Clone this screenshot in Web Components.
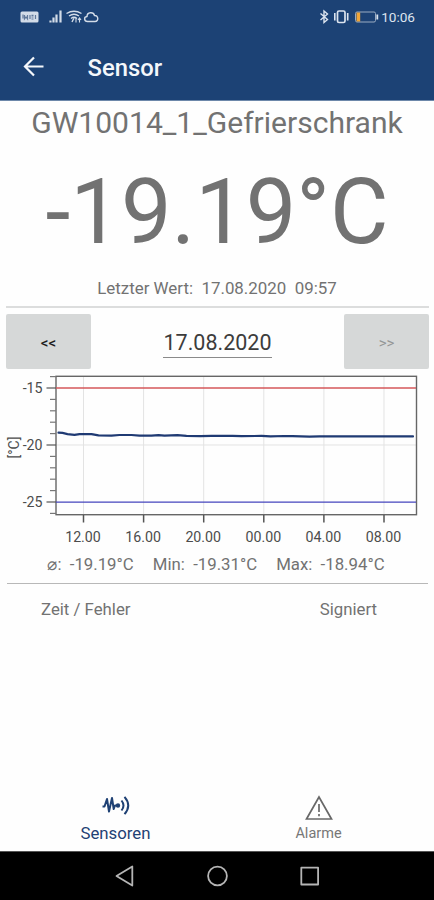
<!DOCTYPE html>
<html lang="de">
<head>
<meta charset="utf-8">
<title>Sensor</title>
<style>
    body {
        margin: 0;
        background: #fefefe;
        font-family: Roboto, sans-serif;
        color: #727272;
    }
</style>
</head>
<body>
<sensor-app></sensor-app>

<script>
class StatusBar extends HTMLElement {
    constructor() {
        super();
        this.attachShadow({ mode: 'open' }).innerHTML = `
            <style>
                :host {
                    display: flex;
                    justify-content: space-between;
                    height: 34px;
                    padding: 0 19px 0 20px;
                    color: #dce4ef;
                    font-size: 13.6px;
                    line-height: 34px;
                }
                .right { display: flex; }
                svg { display: block; flex: none; }
            </style>
            <svg width="80" height="34" viewBox="20 0 80 34" fill="none" stroke="#d3dce8">
                <rect x="20.5" y="11.5" width="18" height="11" rx="1.5" fill="#d3dce8" stroke="none"/>
                <path d="M23 14.500v4M24.500 15v4l1.500-2 1.500 2v-4M30 15v4M31.500 15.300h2M31.500 17h2M31.500 19h2M35.500 15v4" stroke="#60789a" stroke-width="1.200"/>
                <path d="M50.500 22.500v-2M53.500 22.500v-5M56.500 22.500v-8M60.500 22.500v-12" stroke-width="2.200"/>
                <path d="M66.500 13.500q7.500-4.500 15 0M69 16q5-3.500 10 0M71 18.500q3-2.500 6 0M72 22l2-4" stroke-width="1.400"/>
                <path d="M76 18v4.500M79.500 22.500v-4.500M78 20l1.500-2 1.500 2" stroke-width="1.100"/>
                <path d="M87.500 21.500c-3.500 0-4-4.500-.5-5 0-4.500 6.500-5 7.500-1 4-.5 4.500 6 .500 6z" stroke-width="1.400"/>
            </svg>
            <div class="right">
                <svg width="63" height="34" viewBox="317 0 63 34" fill="none" stroke="#dce4ef" stroke-width="1.400">
                    <path d="M319.500 13.500l7 6-3.500 3V11l3.500 3-7 6"/>
                    <rect x="336.500" y="11" width="7.500" height="11.500" rx="1.500" stroke-width="1.700"/>
                    <path d="M333.800 13v7.500M346.700 13v7.500" stroke-width="1.600"/>
                    <rect x="354.500" y="12" width="20" height="10" rx="1.500" stroke="#9aabc2" stroke-width="1"/>
                    <path d="M376.300 14.500v5" stroke-width="1.800"/>
                    <path d="M355.500 12.500h3.700v9h-3.700z" fill="#f0a63a" stroke="none"/>
                </svg>
                <span>10:06</span>
            </div>
        `;
    }
}

class AppHeader extends HTMLElement {
    constructor() {
        super();
        this.attachShadow({ mode: 'open' }).innerHTML = `
            <style>
                :host {
                    display: flex;
                    align-items: center;
                    height: 68px;
                    padding-left: 22px;
                    color: #f4f7fb;
                    font-size: 23.8px;
                    font-weight: 500;
                }
                svg { margin: 0 42.500px 2px 0; }
            </style>
            <svg width="23" height="22" viewBox="0 0 23 22" fill="none" stroke="#f4f7fb" stroke-width="2.200">
                <path d="M21.500 10.500H3.500M12 1.500l-9 9 9 9"/>
            </svg>
            <slot></slot>
        `;
    }
}

class SensorReading extends HTMLElement {
    constructor() {
        super();
        this.attachShadow({ mode: 'open' }).innerHTML = `
            <style>
                :host { display: block; text-align: center; height: 206px; }
                ::slotted(span) { display: block; white-space: pre; }
                .name { height: 45px; line-height: 45px; font-size: 30.050px; }
                .value { height: 135px; line-height: 136px; font-size: 90px; }
                .time { height: 26px; line-height: 16px; font-size: 16.900px; }
            </style>
            <div class="name"><slot name="name"></slot></div>
            <div class="value"><slot name="value"></slot></div>
            <div class="time"><slot name="time"></slot></div>
        `;
    }
}

class DatePager extends HTMLElement {
    constructor() {
        super();
        this.attachShadow({ mode: 'open' }).innerHTML = `
            <style>
                :host {
                    display: flex;
                    justify-content: space-between;
                    align-items: flex-start;
                    margin: 0 5px 0 6px;
                    padding-top: 6px;
                    height: 56px;
                    border-top: 2px solid #dcdddd;
                }
                button {
                    width: 85px;
                    height: 55px;
                    border: 0;
                    border-radius: 2px;
                    background: #d6d8d8;
                    color: #1d1d1d;
                    font: 500 15px Roboto, sans-serif;
                    padding: 2px 0 0;
                }
                button:disabled { color: #949696; font-weight: 400; }
                .date {
                    margin-top: 13px;
                    height: 30px;
                    line-height: 31px;
                    border-bottom: 1px solid #8a8a8a;
                    color: #3c3c3c;
                    font-size: 21.5px;
                }
            </style>
            <button>&lt;&lt;</button>
            <div class="date"><slot></slot></div>
            <button disabled>&gt;&gt;</button>
        `;
    }
}

class SensorChart extends HTMLElement {
    constructor() {
        super();
        const xLabels = ['12.00', '16.00', '20.00', '00.00', '04.00', '08.00'];
        const yLabels = [-15, -20, -25];
        const xAt = i => 83.5 + i * 60.1;
        const yAt = v => 388 + (-15 - v) * 11.4;

        let grid = '', ticks = '', labels = '';
        xLabels.forEach((text, i) => {
            const x = xAt(i);
            grid += `<path d="M${x} 376V515"/>`;
            ticks += `<path d="M${x} 515v7.500" stroke-width="1.500"/>`;
            labels += `<text x="${x - 0.5}" y="541.500" text-anchor="middle">${text}</text>`;
        });
        for (let v = -14; v >= -26; v--) {
            const long = v % 5 === 0;
            ticks += `<path d="M${long ? 46.5 : 50} ${yAt(v)}H56" ${long ? '' : 'stroke="#777"'}/>`;
        }
        yLabels.forEach(v => {
            labels += `<text x="42.500" y="${yAt(v) + 4.8}" text-anchor="end">${v}</text>`;
        });

        this.attachShadow({ mode: 'open' }).innerHTML = `
            <style>
                :host { display: block; height: 180px; }
                svg { display: block; }
                text { font-size: 14.2px; fill: #4c4c4c; }
            </style>
            <svg width="434" height="180" viewBox="0 370 434 180" fill="none">
                <g stroke="#e3e3e3">${grid}<path d="M56 445H416"/></g>
                <rect x="56" y="376.300" width="360.500" height="138.400" stroke="#666" stroke-width="1.400"/>
                <g stroke="#555" stroke-width="1.200">${ticks}</g>
                <path d="M56 388H416" stroke="#d4575a" stroke-width="1.300"/>
                <path d="M56 502.200H416" stroke="#4545bd" stroke-width="1.300"/>
                <path d="M58.500 432.600l4 .3 5 1.200 7 .8 5-.8h12l7 1.300 13 .2 8-.6h12l8 .6 12 .1 7-.6 6 .6 13-.5 9 .6 14 .4 11-.4 21 .1 9 .3 20-.3 9 .5 14-.4 8 .1 17 .5 10-.2H413" stroke="#1f3a73" stroke-width="2.200" stroke-linecap="round" stroke-linejoin="round"/>
                ${labels}
                <text transform="translate(18.800 447.500) rotate(-90)" text-anchor="middle">[°C]</text>
            </svg>
        `;
    }
}

class SensorStats extends HTMLElement {
    constructor() {
        super();
        this.attachShadow({ mode: 'open' }).innerHTML = `
            <style>
                :host {
                    display: flex;
                    justify-content: center;
                    gap: 19px;
                    height: 33px;
                    margin: 0 6px 0 7px;
                    padding-right: 1px;
                    border-bottom: 1.500px solid #b8b8b8;
                    line-height: 29px;
                    font-size: 16.800px;
                    white-space: pre;
                }
                ::slotted(span:first-child) { margin-left: -2px; }
            </style>
            <slot></slot>
        `;
    }
}

class EventColumns extends HTMLElement {
    constructor() {
        super();
        this.attachShadow({ mode: 'open' }).innerHTML = `
            <style>
                :host {
                    display: flex;
                    justify-content: space-between;
                    padding: 9px 57px 0 41px;
                    line-height: 32px;
                    font-size: 16.800px;
                }
            </style>
            <slot></slot>
        `;
    }
}

class TabItem extends HTMLElement {
    constructor() {
        super();
        this.attachShadow({ mode: 'open' }).innerHTML = `
            <style>
                :host {
                    display: flex;
                    flex-direction: column;
                    align-items: center;
                    width: 203px;
                    font-size: 14.500px;
                    line-height: 20px;
                    color: #777;
                }
                :host([active]) { font-size: 16.800px; line-height: 18px; color: #1f4174; }
                .icon { height: 30px; }
                ::slotted(svg) { display: block; }
            </style>
            <div class="icon"><slot name="icon"></slot></div>
            <div><slot></slot></div>
        `;
    }
}

class SystemNav extends HTMLElement {
    constructor() {
        super();
        this.attachShadow({ mode: 'open' }).innerHTML = `
            <style>
                :host {
                    display: flex;
                    justify-content: center;
                    height: 48px;
                    border-top: 1px solid #555;
                    background: #000;
                }
            </style>
            <svg width="434" height="48" viewBox="0 852 434 48" fill="none" stroke="#b5b5b5" stroke-width="1.800" stroke-linejoin="round">
                <path d="M132.300 866.500v19L116.500 876z"/>
                <circle cx="217.500" cy="876" r="9.400"/>
                <rect x="301.300" y="867.700" width="16.800" height="16.800"/>
            </svg>
        `;
    }
}

class SensorApp extends HTMLElement {
    constructor() {
        super();
        this.attachShadow({ mode: 'open' }).innerHTML = `
            <style>
                :host { display: flex; flex-direction: column; height: 900px; width: 434px; }
                .top { box-sizing: border-box; background: #1c4275; height: 101px; border-bottom: 1px solid #6d88aa; margin-bottom: -1px; }
                .tabs { display: flex; justify-content: center; margin-top: auto; padding-bottom: 7px; }
            </style>
            <div class="top">
                <status-bar></status-bar>
                <app-header>Sensor</app-header>
            </div>
            <sensor-reading>
                <span slot="name">GW10014_1_Gefrierschrank</span>
                <span slot="value">-19.19°C</span>
                <span slot="time">Letzter Wert:  17.08.2020  09:57</span>
            </sensor-reading>
            <date-pager>17.08.2020</date-pager>
            <sensor-chart></sensor-chart>
            <sensor-stats>
                <span>⌀:  -19.19°C</span>
                <span>Min:  -19.31°C</span>
                <span>Max:  -18.94°C</span>
            </sensor-stats>
            <event-columns>
                <span>Zeit / Fehler</span>
                <span>Signiert</span>
            </event-columns>
            <div class="tabs">
                <tab-item active>
                    <svg slot="icon" width="30" height="24" viewBox="0 0 30 24" fill="none" stroke="#1f4174" stroke-width="2" stroke-linejoin="round">
                        <path d="M1.500 12.500h2L6 5l2 12.500L11 4l1.700 11 1.300-3.500h2"/>
                        <circle cx="17" cy="11.500" r="1.200" fill="#1f4174"/>
                        <path d="M20.500 6.500q4 5 0 10M23.500 2.800q7.500 8.700 0 17.400"/>
                    </svg>
                    Sensoren
                </tab-item>
                <tab-item>
                    <svg slot="icon" width="30" height="28" viewBox="0 0 30 28" fill="none" stroke="#686868" stroke-width="1.700">
                        <path d="M15 3L2.500 25h25z"/>
                        <path d="M15 10v8M15 20v2.200"/>
                    </svg>
                    Alarme
                </tab-item>
            </div>
            <system-nav></system-nav>
        `;
    }
}

customElements.define('status-bar', StatusBar);
customElements.define('app-header', AppHeader);
customElements.define('sensor-reading', SensorReading);
customElements.define('date-pager', DatePager);
customElements.define('sensor-chart', SensorChart);
customElements.define('sensor-stats', SensorStats);
customElements.define('event-columns', EventColumns);
customElements.define('tab-item', TabItem);
customElements.define('system-nav', SystemNav);
customElements.define('sensor-app', SensorApp);
</script>
</body>
</html>
